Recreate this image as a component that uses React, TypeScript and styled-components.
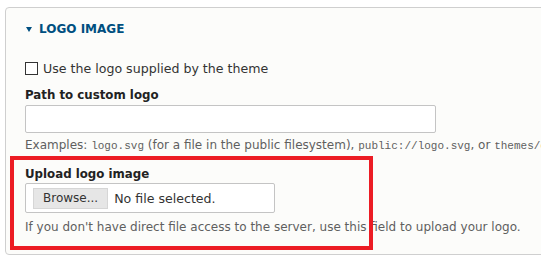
import React from "react";
import styled, { createGlobalStyle } from "styled-components";

const Global = createGlobalStyle`
  html, body { margin: 0; padding: 0; background: #ffffff; overflow: hidden; }
  body { font-family: "DejaVu Sans", "Liberation Sans", sans-serif; color: #333; }
`;

const Page = styled.div`
  width: 541px;
  height: 266px;
  padding: 7px 0 0 5px;
  box-sizing: border-box;
  position: relative;
  overflow: hidden;
`;

const Panel = styled.div`
  width: 580px;
  height: 248px;
  box-sizing: border-box;
  border: 1px solid #cfcfcf;
  border-radius: 4px;
  background: #fcfcfa;
  padding: 13px 19px 0 19px;
`;

const Summary = styled.div`
  display: flex;
  align-items: center;
  gap: 7px;
  height: 16px;
  color: #004f80;
  font-weight: bold;
  font-size: 12px;
  text-transform: uppercase;
`;

const Triangle = styled.span`
  width: 0;
  height: 0;
  border-left: 3px solid transparent;
  border-right: 3px solid transparent;
  border-top: 5px solid #004f80;
  margin-left: 1px;
`;

const CheckRow = styled.label`
  display: flex;
  align-items: center;
  gap: 5px;
  margin-top: 23px;
  font-size: 12.6px;
  color: #333;
  height: 16px;
`;

const Box = styled.span`
  width: 11px;
  height: 11px;
  border: 1px solid #333;
  background: #fff;
`;

const Field = styled.div<{ $top: number }>`
  margin-top: ${(p) => p.$top}px;
`;

const Label = styled.div`
  font-weight: bold;
  font-size: 11.8px;
  color: #222;
  height: 16px;
  line-height: 16px;
`;

const TextInput = styled.div`
  margin-top: 2px;
  width: 411px;
  height: 28px;
  box-sizing: border-box;
  border: 1px solid #c4c4c4;
  border-radius: 2px;
  background: #fff;
`;

const Description = styled.div<{ $top: number }>`
  font-size: 12px;
  color: #5f5f5f;
  margin-top: ${(p) => p.$top}px;
  white-space: nowrap;
  line-height: 14px;
`;

const Code = styled.code`
  font-family: "Liberation Mono", monospace;
  font-size: 11px;
`;

const FileBox = styled.div`
  margin-top: 1px;
  width: 250px;
  height: 30px;
  box-sizing: border-box;
  border: 1px solid #c4c4c4;
  border-radius: 2px;
  background: #fff;
  display: flex;
  align-items: center;
  padding-left: 7px;
  gap: 6px;
`;

const BrowseButton = styled.span`
  height: 21px;
  padding: 0 9px;
  box-sizing: border-box;
  border: 1px solid #d6d6d6;
  background: #e6e6e6;
  display: flex;
  align-items: center;
  font-size: 12px;
  color: #333;
`;

const FileName = styled.span`
  font-size: 12.6px;
  color: #333;
`;

const Highlight = styled.div`
  position: absolute;
  left: 10px;
  top: 156px;
  width: 363px;
  height: 94px;
  box-sizing: border-box;
  border: 4px solid #ec1c24;
  pointer-events: none;
`;

export default function App() {
  return (
    <Page>
      <Global />
      <Panel>
        <Summary>
          <Triangle />
          Logo image
        </Summary>
        <CheckRow>
          <Box />
          Use the logo supplied by the theme
        </CheckRow>
        <Field $top={11}>
          <Label>Path to custom logo</Label>
          <TextInput />
          <Description $top={5}>
            Examples: <Code>logo.svg</Code> (for a file in the public filesystem),{" "}
            <Code>public://logo.svg</Code>, or <Code>themes/custom/logo.svg</Code>.
          </Description>
        </Field>
        <Field $top={13}>
          <Label>Upload logo image</Label>
          <FileBox>
            <BrowseButton>Browse...</BrowseButton>
            <FileName>No file selected.</FileName>
          </FileBox>
          <Description $top={7}>
            If you don't have direct file access to the server, use this field to upload your logo.
          </Description>
        </Field>
      </Panel>
      <Highlight />
    </Page>
  );
}
